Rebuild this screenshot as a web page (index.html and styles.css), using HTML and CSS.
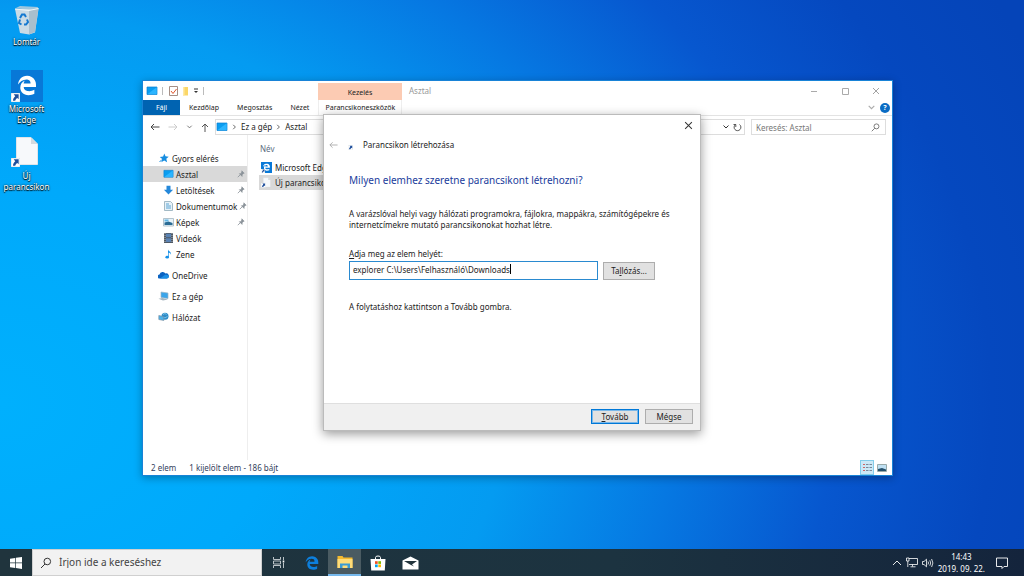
FILE: index.html
```html
<!DOCTYPE html>
<html lang="hu">

<head>
    <meta charset="utf-8" />
    <title>Asztal</title>
    <link rel="stylesheet" href="styles.css">
</head>

<body>
    <svg class="defs" width="0" height="0">
        <defs>
            <symbol id="edge" viewBox="0 0 512 512">
                <path d="M25.714 228.163c.111-.162.23-.323.342-.485-.021.162-.045.323-.065.485h-.277zm460.572 15.508c0-44.032-7.754-84.465-28.801-122.405C416.498 47.879 343.912 8.001 258.893 8.001 118.962 7.724 40.617 113.214 26.056 227.679c42.429-61.312 117.073-121.376 220.375-124.966 0 0 109.666 0 99.419 104.957H169.997c6.369-37.386 18.554-58.986 34.339-78.926-75.048 34.893-121.85 96.096-120.742 188.315.83 71.448 50.124 144.836 120.743 171.976 83.357 31.847 192.776 7.2 240.132-21.324V363.307c-80.864 56.494-270.871 60.925-272.255-67.572h314.073v-52.064z" />
            </symbol>
            <symbol id="shortcut" viewBox="0 0 10 10">
                <path d="M0 0h10v10H0z" fill="#fff" stroke="#b8c4cc" stroke-width=".6" />
                <path d="M3 1.500h5.500v5.500L7 5.500C5.800 6.200 5 7.200 4.700 8.700H2.200C2.200 6.600 3.200 4.800 4.700 3.500z" fill="#1f4f9c" />
            </symbol>
            <symbol id="monitor" viewBox="0 0 12 10">
                <path d="M1 1h10v7.500H1z" fill="#0a9df0" stroke="#0b7fd0" stroke-width=".7" />
                <path d="M1.300 8.200L10.700 1.300v6.900z" fill="#2cb5ff" />
            </symbol>
            <symbol id="pin" viewBox="0 0 10 10">
                <path d="M6 1l3 3-1 .4-1.600 1.600v2L3 4.600h2L6 2.300z" fill="#8a9299" stroke="#8a9299" stroke-width=".8" />
                <path d="M4.400 5.600L1 9" stroke="#8a9299" />
            </symbol>
            <symbol id="back" viewBox="0 0 10 8">
                <path d="M9.500 4H1M4 1L1 4l3 3" fill="none" stroke="currentColor" />
            </symbol>
            <symbol id="down" viewBox="0 0 8 6">
                <path d="M1.500 1.500L4 4l2.500-2.500" fill="none" stroke="currentColor" />
            </symbol>
            <symbol id="close" viewBox="0 0 8 8">
                <path d="M1 1l6 6M7 1L1 7" fill="none" stroke="currentColor" stroke-width=".9" />
            </symbol>
            <symbol id="glass" viewBox="0 0 12 12">
                <circle cx="7.300" cy="4.500" r="3.300" fill="none" stroke="currentColor" />
                <path d="M5 7L1 11" stroke="currentColor" />
            </symbol>
            <symbol id="page" viewBox="0 0 22 28">
                <path d="M.5.5h14.500l6.500 6.500v20.500H.5z" fill="#f7f9fb" stroke="#dfe5ea" />
                <path d="M15 .5v6.500h6.500z" fill="#d5dade" />
            </symbol>
        </defs>
    </svg>

    <main class="desktop">
        <div class="shortcuts">
            <a class="shortcut" href="#">
                <svg class="shortcut-icon" viewBox="0 0 32 32">
                    <path d="M4 5.500l5 -2.500 18 1 -1 3z" fill="#9fc6dd" />
                    <path d="M4 6h23.500l-3.500 23.500-6 2-9-1.500z" fill="#c9dbe6" />
                    <path d="M18 7l9.500-2-3.500 24-6 2.500z" fill="#a9bfcd" />
                    <path d="M4 6l14 1.500 9.500-2" fill="none" stroke="#eef7fb" />
                    <g fill="none" stroke="#1479d0" stroke-width="2">
                        <path d="M9 15l2-3.500h2.500l1.500 2.500" />
                        <path d="M16 16.500l1 2.500-2 2.500h-2" />
                        <path d="M10.500 21.500l-2.500-1.500 1-3.500" />
                    </g>
                </svg>
                <span>Lomtár</span>
            </a>
            <a class="shortcut" href="#">
                <svg class="shortcut-icon" viewBox="0 0 32 32">
                    <path d="M0 0h32v32H0z" fill="#0878d7" />
                    <use href="#edge" x="6" y="5" width="20" height="21" fill="#fff" />
                    <use href="#shortcut" x="0" y="23" width="9" height="9" />
                </svg>
                <span>Microsoft Edge</span>
            </a>
            <a class="shortcut" href="#">
                <svg class="shortcut-icon" viewBox="0 0 32 32">
                    <use href="#page" x="5" y="0" width="22" height="28" />
                    <use href="#shortcut" x="0" y="21" width="9" height="9" />
                </svg>
                <span>Új parancsikon</span>
            </a>
        </div>

        <section class="window explorer">
            <header class="titlebar">
                <div class="quick">
                    <svg width="12" height="10"><use href="#monitor" /></svg>
                    <i class="sep"></i>
                    <svg width="9" height="10" viewBox="0 0 9 10">
                        <path d="M.5.5h8v9h-8z" fill="#fff" stroke="#a58f86" />
                        <path d="M2 5l2 2.500L7.500 3" fill="none" stroke="#e0552b" />
                    </svg>
                    <svg width="7" height="10" viewBox="0 0 7 10">
                        <path d="M1 1h5v8.500H1z" fill="#fbd768" />
                        <path d="M1 1h1.500v8.500H1z" fill="#ffe9a3" />
                    </svg>
                    <svg width="6" height="6" viewBox="0 0 6 6"><path d="M1 1h4" stroke="#333" /><path d="M1 3h4L3 5z" fill="#333" /></svg>
                    <i class="sep"></i>
                </div>
                <div class="context">Kezelés</div>
                <h1 class="title">Asztal</h1>
                <div class="controls">
                    <button class="icon-button" aria-label="Kis méret"><svg width="8" height="8" viewBox="0 0 8 8"><path d="M1 4.500h6" stroke="#aaa" /></svg></button>
                    <button class="icon-button" aria-label="Teljes méret"><svg width="8" height="8" viewBox="0 0 8 8"><path d="M1.500 1.500h6v6h-6z" fill="none" stroke="#aaa" /></svg></button>
                    <button class="icon-button" aria-label="Bezárás"><svg width="8" height="8" color="#999"><use href="#close" /></svg></button>
                </div>
            </header>

            <nav class="tabs">
                <a class="tab file" href="#">Fájl</a>
                <a class="tab" href="#">Kezdőlap</a>
                <a class="tab" href="#">Megosztás</a>
                <a class="tab" href="#">Nézet</a>
                <a class="tab tools" href="#">Parancsikoneszközök</a>
                <div class="help">
                    <svg width="9" height="7" color="#aaa"><use href="#down" /></svg>
                    <button class="help-button" aria-label="Súgó">?</button>
                </div>
            </nav>

            <div class="addressbar">
                <div class="arrows">
                    <svg width="10" height="8" color="#444"><use href="#back" /></svg>
                    <svg class="forward" width="10" height="8" color="#ccc"><use href="#back" /></svg>
                    <svg width="7" height="6" color="#666"><use href="#down" /></svg>
                    <svg width="8" height="9" viewBox="0 0 8 9"><path d="M4 9V1M1 4l3-3 3 3" fill="none" stroke="#555" /></svg>
                </div>
                <div class="path">
                    <svg width="12" height="10"><use href="#monitor" /></svg>
                    <svg class="crumb-arrow" width="7" height="6" color="#555"><use href="#down" /></svg>
                    <span>Ez a gép</span>
                    <svg class="crumb-arrow" width="7" height="6" color="#555"><use href="#down" /></svg>
                    <span>Asztal</span>
                    <div class="path-end">
                        <svg width="8" height="6" color="#333"><use href="#down" /></svg>
                        <svg width="9" height="9" viewBox="0 0 9 9"><path d="M2.500 1.500a3.400 3.400 0 1 0 4 0M2.800 4V1.500H.5" fill="none" stroke="#444" stroke-width=".9" /></svg>
                    </div>
                </div>
                <label class="search">
                    <input type="search" placeholder="Keresés: Asztal" aria-label="Keresés: Asztal">
                    <svg width="9" height="9" color="#555"><use href="#glass" /></svg>
                </label>
            </div>

            <div class="content">
                <nav class="tree">
                    <a class="node" href="#">
                        <svg width="10" height="10" viewBox="0 0 10 10"><path d="M5.300.5l1.200 2.800 3.200.4-2.400 2 .8 3.500L5.200 7.500 2.300 9.200 3.200 6 .8 3.900l3.300-.5z" fill="#178de0" /><path d="M3 6.500L.5 9" stroke="#178de0" /></svg>
                        Gyors elérés</a>
                    <a class="node sub selected" href="#">
                        <svg width="11" height="10"><use href="#monitor" /></svg>
                        Asztal<svg class="pin" width="8" height="8"><use href="#pin" /></svg></a>
                    <a class="node sub" href="#">
                        <svg width="11" height="10" viewBox="0 0 11 10"><path d="M3.500.8h4v4h2.600L5.500 9.500.900 4.800h2.600z" fill="#2488da" /></svg>
                        Letöltések<svg class="pin" width="8" height="8"><use href="#pin" /></svg></a>
                    <a class="node sub" href="#">
                        <svg width="11" height="10" viewBox="0 0 11 10"><path d="M1.500.5h6l2 2v7h-8z" fill="#e8f2f8" stroke="#8ea9b8" stroke-width=".8" /><path d="M3 3h3M3 5h5M3 7h5" stroke="#4a9bd0" stroke-width=".9" /></svg>
                        Dokumentumok<svg class="pin" width="8" height="8"><use href="#pin" /></svg></a>
                    <a class="node sub" href="#">
                        <svg width="11" height="10" viewBox="0 0 11 10"><path d="M.5 1.500h10v7.500H.5z" fill="#e7f3fa" stroke="#a3b5bf" stroke-width=".8" /><path d="M1.500 5.500l4-1L9.500 6v2H1.500z" fill="#2a6b94" /><path d="M1.500 2.500h4v2h-4z" fill="#62b6e6" /></svg>
                        Képek<svg class="pin" width="8" height="8"><use href="#pin" /></svg></a>
                    <a class="node sub" href="#">
                        <svg width="11" height="10" viewBox="0 0 11 10"><path d="M1 0h9v10H1z" fill="#4e5864" /><path d="M3 .8h5v3.500H3zM3 5.300h5v3.800H3z" fill="#5a83b4" /><path d="M2 0v10M9 0v10" stroke="#c8ced4" stroke-width=".8" stroke-dasharray="1 1" /></svg>
                        Videók</a>
                    <a class="node sub" href="#">
                        <svg width="11" height="10" viewBox="0 0 11 10"><path d="M5 8V.5c.5 2 3.500 2 3 5.200C7.700 4.200 6.500 3.800 5.700 3.800V8z" fill="#1590e8" /><ellipse cx="4.200" cy="8.200" rx="1.800" ry="1.400" fill="#1590e8" /></svg>
                        Zene</a>
                    <a class="node root" href="#">
                        <svg width="11" height="10" viewBox="0 0 11 10"><path d="M2 8.500A2 2 0 0 1 1.500 4.500 3.300 3.300 0 0 1 7.500 3.500 2.500 2.500 0 0 1 9 8.500z" fill="#0a63c2" /><path d="M2 8.500L7 4.800c2-.5 3.800.5 3.800 2 0 1-.8 1.700-1.800 1.700z" fill="#1b8fe6" /></svg>
                        OneDrive</a>
                    <a class="node root" href="#">
                        <svg width="11" height="10" viewBox="0 0 11 10"><path d="M3 1l7 1v5.500l-7-1z" fill="#3aa5ea" stroke="#9db5c3" stroke-width=".7" /><path d="M.5 7.800l4-.8 5.500 1.500-5 1z" fill="#a3b4bf" /></svg>
                        Ez a gép</a>
                    <a class="node root" href="#">
                        <svg width="11" height="10" viewBox="0 0 11 10"><circle cx="7" cy="4.300" r="3.500" fill="#2d8cc9" /><path d="M5 2.500q2-2 3.500 0M5 5.500q2 1 4.500-1" fill="none" stroke="#8dd0ee" stroke-width=".8" /><path d="M.8 3.500l5 1v4l-5-1z" fill="#4cb2ea" stroke="#778899" stroke-width=".6" /></svg>
                        Hálózat</a>
                </nav>
                <table class="files">
                    <thead>
                        <tr><th>Név</th></tr>
                    </thead>
                    <tbody>
                        <tr>
                            <td><div class="name">
                                <svg width="11" height="11" viewBox="0 0 32 32"><path d="M0 0h32v32H0z" fill="#0878d7" /><use href="#edge" x="5" y="4" width="22" height="22" fill="#fff" /><use href="#shortcut" y="20" width="12" height="12" /></svg>
                                Microsoft Edge</div></td>
                        </tr>
                        <tr class="selected">
                            <td><div class="name">
                                <svg width="11" height="11" viewBox="0 0 32 32"><use href="#page" x="6" y="1" width="22" height="29" /><use href="#shortcut" y="17" width="14" height="14" /></svg>
                                Új parancsikon</div></td>
                        </tr>
                    </tbody>
                </table>
            </div>

            <footer class="status">
                <span>2 elem</span>
                <span>1 kijelölt elem - 186 bájt</span>
                <div class="views">
                    <button class="view active" aria-label="Részletek"><svg width="11" height="11" viewBox="0 0 11 11"><path d="M1 2.500h2M1 5.500h2M1 8.500h2" stroke="#cc6666" /><path d="M4 2.500h2.500M4 5.500h2.500M4 8.500h2.500M7.500 2.500H10M7.500 5.500H10M7.500 8.500H10" stroke="#778899" /></svg></button>
                    <button class="view" aria-label="Nagy ikonok"><svg width="10" height="8" viewBox="0 0 10 8"><path d="M.5.5h9v7h-9z" fill="#bfe0f3" stroke="#99aaaa" /><path d="M1 5l4-1 4 1.500V7H1z" fill="#24506c" /></svg></button>
                </div>
            </footer>
        </section>

        <section class="window wizard">
            <div class="wizard-top">
                <button class="icon-button" aria-label="Bezárás"><svg width="9" height="9" color="#333"><use href="#close" /></svg></button>
            </div>
            <header class="wizard-header">
                <svg width="9" height="8" color="#aaa"><use href="#back" /></svg>
                <svg class="wizard-icon" width="5" height="5"><use href="#shortcut" /></svg>
                <span>Parancsikon létrehozása</span>
            </header>
            <form class="wizard-body">
                <h2>Milyen elemhez szeretne parancsikont létrehozni?</h2>
                <p>A varázslóval helyi vagy hálózati programokra, fájlokra, mappákra, számítógépekre és internetcímekre mutató parancsikonokat hozhat létre.</p>
                <label for="location"><u>A</u>dja meg az elem helyét:</label>
                <div class="field">
                    <div class="textbox">
                        <input id="location" type="text" value="explorer C:\Users\Felhasználó\Downloads">
                        <i class="caret"></i>
                    </div>
                    <button class="button" type="button">Ta<u>l</u>lózás...</button>
                </div>
                <p>A folytatáshoz kattintson a Tovább gombra.</p>
            </form>
            <footer class="wizard-footer">
                <button class="button primary"><u>T</u>ovább</button>
                <button class="button">Mégse</button>
            </footer>
        </section>
    </main>

    <footer class="taskbar">
        <button class="task start" aria-label="Start">
            <svg width="12" height="12" viewBox="0 0 12 12"><path d="M0 1.700l5.200-.8v4.700H0zM5.900.8L12 0v5.600H5.900zM0 6.300h5.200V11L0 10.300zM5.900 6.300H12V12l-6.100-.9z" fill="#fff" /></svg>
        </button>
        <label class="task-search">
            <svg width="12" height="12" color="#333"><use href="#glass" /></svg>
            <input type="search" placeholder="Írjon ide a kereséshez" aria-label="Írjon ide a kereséshez">
        </label>
        <button class="task" aria-label="Feladatnézet">
            <svg width="12" height="11" viewBox="0 0 12 11"><path d="M.5 0v2.500h7V0M.5 11V8.500h7V11M.5 4h7v3h-7zM10.500 0v3M10.500 6v5" fill="none" stroke="#ccd3d6" stroke-width=".9" /><path d="M9.700 3.500h1.600v2H9.700z" fill="#fff" /></svg>
        </button>
        <button class="task" aria-label="Microsoft Edge">
            <svg width="14" height="14" fill="#0d7fdc"><use href="#edge" /></svg>
        </button>
        <button class="task active" aria-label="Fájlkezelő">
            <svg width="16" height="14" viewBox="0 0 16 14"><path d="M.5 1h5l1 1.500h9V13H.5z" fill="#f4b92f" /><path d="M.5 4h15v9H.5z" fill="#ffdc78" /><path d="M3 13V8.500h10V13h-2.500v-2.500h-5V13z" fill="#3b9bd3" /></svg>
        </button>
        <button class="task" aria-label="Microsoft Store">
            <svg width="16" height="16" viewBox="0 0 16 16"><path d="M5.500 4V2.500q0-1.500 2.500-1.500t2.500 1.500V4" fill="none" stroke="#fff" /><path d="M.5 4h15l-.7 11.500H1.200z" fill="#fff" /><path d="M5 6.200h2.700v2.700H5z" fill="#f25022" /><path d="M8.300 6.200H11v2.700H8.300z" fill="#7fba00" /><path d="M5 9.500h2.700v2.700H5z" fill="#00a4ef" /><path d="M8.300 9.500H11v2.700H8.300z" fill="#ffb900" /></svg>
        </button>
        <button class="task" aria-label="Posta">
            <svg width="17" height="14" viewBox="0 0 17 14"><path d="M.5 4.500L8.500.5l8 4V13.500H.5z" fill="#fff" /><path d="M2 5h13L10 8.500 12 10.500 8.500 8.700z" fill="#22343c" /></svg>
        </button>
        <div class="tray">
            <svg width="10" height="7" viewBox="0 0 10 7"><path d="M1 6l4-4 4 4" fill="none" stroke="#fff" stroke-width=".9" /></svg>
            <svg width="12" height="11" viewBox="0 0 12 11"><path d="M3 1.500h8.500v6H3M6.500 7.500v2M4.500 9.800h5M.5 1h2.500v3h-2.500zM1.800 4v6" fill="none" stroke="#fff" stroke-width=".8" /></svg>
            <svg width="12" height="10" viewBox="0 0 12 10"><path d="M.5 3.500H2L4.500 1.200v7.600L2 6.500H.5zM6 3.500q1 1.500 0 3M7.800 2.300q1.800 2.700 0 5.400M9.600 1q2.600 4 0 8" fill="none" stroke="#fff" stroke-width=".8" /></svg>
            <time class="clock" datetime="2019-09-22T14:43">14:43<br>2019. 09. 22.</time>
            <svg width="12" height="12" viewBox="0 0 12 12"><path d="M.5 1h11v8.500H8L6 11.500V9.500H.5z" fill="none" stroke="#fff" stroke-width=".9" /></svg>
        </div>
    </footer>
</body>

</html>
```
FILE: styles.css
```css
* {
    box-sizing: border-box;
}

body {
    display: flex;
    flex-direction: column;
    min-height: 100vh;
    margin: 0;
    font-family: "Noto Sans", "Open Sans", sans-serif;
    font-size: 8px;
    line-height: 11px;
    color: #222;
    background: radial-gradient(110% 150% at 0 70%, #00b0fd 0%, #00a9fb 25%, #049bf1 45%, #0678e2 60%, #0757cf 74%, #0548bf 88%, #0544b8 100%);
}

a {
    color: inherit;
    text-decoration: none;
}

button,
input {
    font: inherit;
    color: inherit;
}

svg {
    flex: none;
}

.defs {
    position: absolute;
}

.desktop {
    flex: 1;
}

/* desktop icons */
.shortcuts {
    display: flex;
    flex-direction: column;
    width: 53px;
    padding-top: 3px;
}

.shortcut {
    display: flex;
    flex-direction: column;
    align-items: center;
    gap: 1px;
    min-height: 67px;
    text-align: center;
    color: #fff;
    text-shadow: 0 1px 1px #000, 0 0 2px #000;
}

.shortcut-icon {
    width: 32px;
    height: 32px;
}

.window {
    position: absolute;
    display: flex;
    flex-direction: column;
    background: #fff;
}

.icon-button {
    display: flex;
    padding: 0;
    border: 0;
    background: none;
}

/* explorer */
.explorer {
    inset: 80px 131px 100px 142px;
    border: 1px solid #1883d7;
    box-shadow: 0 2px 8px rgba(0, 0, 0, 0.3);
}

.titlebar {
    display: flex;
    align-items: center;
    height: 19px;
}

.quick {
    display: flex;
    align-items: center;
    gap: 4px;
    width: 175px;
    padding-left: 3px;
}

.sep {
    width: 1px;
    height: 8px;
    margin-right: 2px;
    background: #bbb;
}

.context {
    align-self: stretch;
    width: 84px;
    margin-top: 2px;
    padding-top: 4px;
    font-size: 7px;
    text-align: center;
    background: #fccbb3;
}

.title {
    margin: 0 0 0 7px;
    font-size: 8px;
    font-weight: normal;
    color: #999;
}

.controls {
    display: flex;
    gap: 23px;
    margin-left: auto;
    padding-right: 12px;
}

.tabs {
    display: flex;
    align-items: center;
    height: 16px;
    border-bottom: 1px solid #e3e3e3;
    font-size: 7px;
    line-height: 15px;
}

.tab {
    padding: 0 9px;
}

.file {
    width: 37px;
    text-align: center;
    padding: 0;
    color: #fff;
    background: #0063b1;
}

.tools {
    width: 84px;
    padding: 0;
    text-align: center;
    border: 0 solid #eee;
    border-width: 0 1px;
}

.help {
    display: flex;
    align-items: center;
    gap: 4px;
    margin-left: auto;
    padding-right: 2px;
}

.help-button {
    width: 10px;
    height: 10px;
    padding: 0;
    border: 0;
    border-radius: 50%;
    font-weight: bold;
    line-height: 10px;
    color: #fff;
    background: #0a6cc4;
}

.addressbar {
    display: flex;
    align-items: center;
    gap: 6px;
    padding: 3px 6px 0 7px;
}

.arrows {
    display: flex;
    align-items: center;
    gap: 8px;
    width: 59px;
}

.forward {
    transform: scaleX(-1);
}

.path {
    display: flex;
    flex: 1;
    align-items: center;
    gap: 3px;
    height: 16px;
    padding-right: 2px;
    border: 1px solid #ddd;
    line-height: 10px;
}

.crumb-arrow {
    transform: rotate(-90deg);
}

.path-end {
    display: flex;
    align-items: center;
    gap: 3px;
    margin-left: auto;
}

.search {
    display: flex;
    align-items: center;
    width: 135px;
    height: 16px;
    padding: 0 5px 0 4px;
    border: 1px solid #ddd;
}

.search input,
.task-search input {
    flex: 1;
    min-width: 0;
    padding: 0;
    border: 0;
    outline: 0;
    background: none;
}

.search input::placeholder {
    color: #777;
}

.content {
    display: flex;
    flex: 1;
}

.tree {
    width: 105px;
    padding-top: 15px;
    border-right: 1px solid #eee;
}

.node {
    display: flex;
    align-items: center;
    gap: 3px;
    height: 16px;
    padding-left: 16px;
}

.sub {
    gap: 2px;
    padding-left: 20px;
}

.root {
    margin-top: 5px;
    padding-left: 15px;
}

.selected {
    background: #d9d9d9;
}

.pin {
    margin-left: auto;
    margin-right: 2px;
}

.files {
    width: 30%;
    align-self: flex-start;
    margin: 7px 11px 0;
    border-collapse: collapse;
}

.files th {
    height: 18px;
    padding: 0 0 6px 1px;
    font-weight: normal;
    text-align: left;
    color: #5b6b80;
}

.files td {
    height: 15px;
    padding: 0 2px;
}

.name {
    display: flex;
    align-items: center;
    gap: 3px;
}

.status {
    display: flex;
    align-items: center;
    gap: 13px;
    height: 15px;
    padding-left: 8px;
    color: #33415c;
}

.views {
    display: flex;
    gap: 1px;
    margin-left: auto;
    padding-right: 3px;
}

.view {
    display: flex;
    align-items: center;
    justify-content: center;
    width: 14px;
    height: 15px;
    padding: 0;
    border: 0;
    background: none;
}

.view.active {
    border: 1px solid #84cdea;
    background: #cce8f6;
}

/* shortcut wizard */
.wizard {
    inset: 114px 323px 145px;
    border: 1px solid #bbb;
    box-shadow: 0 3px 10px rgba(0, 0, 0, 0.4);
}

.wizard-top {
    display: flex;
    justify-content: flex-end;
    padding: 6px 7px 0 0;
}

.wizard-header {
    display: flex;
    align-items: center;
    gap: 10px;
    padding: 9px 5px 0;
}

.wizard-icon {
    margin-top: 5px;
}

.wizard-body {
    flex: 1;
    padding: 23px 25px 0;
}

.wizard-body h2 {
    margin: 0 0 21px;
    font-size: 10px;
    font-weight: normal;
    line-height: 14px;
    color: #1a3c9c;
}

.wizard-body p {
    margin: 0 0 18px;
}

.field {
    display: flex;
    align-items: center;
    gap: 5px;
    margin: 2px 20px 21px 0;
}

.textbox {
    display: flex;
    flex: 1;
    height: 19px;
    padding-left: 3px;
    border: 1px solid #2a8ad0;
}

.textbox input {
    field-sizing: content;
    height: 14px;
    padding: 0;
    border: 0;
    outline: 0;
    background: none;
}

.caret {
    width: 1px;
    height: 10px;
    margin-top: 2px;
    background: #000;
}

.button {
    width: 48px;
    height: 15px;
    padding: 0;
    border: 1px solid #adadad;
    background: #e1e1e1;
}

.field .button {
    width: 52px;
    height: 18px;
}

.button.primary {
    border: 1px solid #0078d7;
    box-shadow: inset 0 0 0 1px #7ab8ea;
}

.wizard-footer {
    display: flex;
    justify-content: flex-end;
    gap: 6px;
    padding: 5px 7px 6px;
    border-top: 1px solid #dfdfdf;
    background: #f0f0f0;
}

/* taskbar */
.taskbar {
    display: flex;
    height: 27px;
    color: #fff;
    background: linear-gradient(90deg, #20343d, #1c3340 60%, #14243c);
}

.task {
    display: flex;
    align-items: center;
    justify-content: center;
    width: 33px;
    padding: 0;
    border: 0;
    background: none;
}

.task.start {
    width: 32px;
}

.task.active {
    border-bottom: 2px solid #76b9ed;
    background: #4a5b62;
}

.task-search {
    display: flex;
    align-items: center;
    gap: 7px;
    width: 230px;
    padding: 0 7px;
    border: 1px solid #d0d0d0;
    font-size: 10px;
    color: #333;
    background: #f2f2f2;
}

.task-search input::placeholder {
    color: #444;
}

.tray {
    display: flex;
    align-items: center;
    gap: 4px;
    margin-left: auto;
    padding-right: 16px;
}

.clock {
    margin-right: 7px;
    line-height: 12px;
    text-align: center;
}
```
